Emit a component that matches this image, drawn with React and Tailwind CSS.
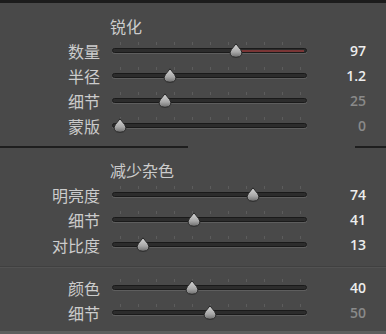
import React from "react";

const sharpen = [
  { label: "数量", value: "97", frac: 97 / 150, active: true, red: true },
  { label: "半径", value: "1.2", frac: 0.7 / 2.5, active: true },
  { label: "细节", value: "25", frac: 0.25, active: false },
  { label: "蒙版", value: "0", frac: 0, active: false },
];

const noise = [
  { label: "明亮度", value: "74", frac: 0.74, active: true },
  { label: "细节", value: "41", frac: 0.41, active: true },
  { label: "对比度", value: "13", frac: 0.13, active: true },
];

const color = [
  { label: "颜色", value: "40", frac: 0.4, active: true },
  { label: "细节", value: "50", frac: 0.5, active: false },
];

const cjk = { fontFamily: '"Noto Sans CJK SC", "Noto Sans", sans-serif' };
const num = { fontFamily: '"Open Sans", "Liberation Sans", sans-serif' };

function Thumb() {
  return (
    <svg width="14" height="15" viewBox="0 0 14 15">
      <defs>
        <linearGradient id="tg" x1="0" y1="0" x2="0" y2="1">
          <stop offset="0" stopColor="#d6d6d6" />
          <stop offset="0.6" stopColor="#a8a8a8" />
          <stop offset="1" stopColor="#6c6c6c" />
        </linearGradient>
      </defs>
      <path
        d="M7 0.8 L11.6 6.6 Q13.6 9.2 12.6 11.8 Q11.2 14.3 7 14.3 Q2.8 14.3 1.4 11.8 Q0.4 9.2 2.4 6.6 Z"
        fill="url(#tg)"
        stroke="#262626"
        strokeWidth="1"
      />
    </svg>
  );
}

function Slider({ frac, red }) {
  const x = 8 + 180 * frac;
  return (
    <div className="relative w-[195px] h-[25px] flex flex-col justify-center">
      <div className="flex h-[3px] mb-[3px]">
        {Array.from({ length: 11 }).map((_, i) => (
          <div
            key={i}
            className="absolute w-px h-[3px] bg-[#5c5c5c]"
            style={{ left: 8 + 18 * i }}
          />
        ))}
      </div>
      <div className="relative h-[5px] rounded-full bg-[#2c2c2c] border border-[#1a1a1a] shadow-[0_1px_0_#5e5e5e]">
        {red && (
          <div
            className="absolute top-[1px] right-[2px] h-[2px] bg-[#7a3636]"
            style={{ left: x }}
          />
        )}
      </div>
      <div className="h-[6px]" />
      <div className="absolute top-[5px]" style={{ left: x - 7 }}>
        <Thumb />
      </div>
    </div>
  );
}

function Row({ label, value, frac, active, red }) {
  return (
    <div className="flex items-center h-[25px]">
      <div className="w-[100px] text-right text-[16px] leading-none text-[#cccccc]" style={cjk}>
        {label}
      </div>
      <div className="ml-[12px]">
        <Slider frac={frac} red={red} />
      </div>
      <div
        className={`w-[59px] text-right text-[14px] font-semibold leading-none ${
          active ? "text-[#ededed]" : "text-[#8a8a8a]"
        }`}
        style={num}
      >
        {value}
      </div>
    </div>
  );
}

function Header({ children }) {
  return (
    <div className="flex items-center h-[25px] pl-[110px] text-[16px] leading-none text-[#cccccc]" style={cjk}>
      {children}
    </div>
  );
}

export default function App() {
  return (
    <div className="w-[386px] h-[334px] bg-[#494949] flex flex-col overflow-hidden">
      <div className="h-[3px] bg-[#1c1c1c]" />
      <div className="pt-[10px]">
        <Header>锐化</Header>
        {sharpen.map((r, i) => (
          <Row key={i} {...r} />
        ))}
      </div>
      <div className="mt-[8px] flex h-[2px]">
        <div className="w-[188px] bg-[#1e1e1e]" />
        <div className="flex-1" />
        <div className="w-[31px] bg-[#1e1e1e]" />
      </div>
      <div className="pt-[9px]">
        <Header>减少杂色</Header>
        {noise.map((r, i) => (
          <Row key={i} {...r} />
        ))}
      </div>
      <div className="mt-[9px] h-px bg-[#404040]" />
      <div className="h-px bg-[#525252]" />
      <div className="pt-[7px]">
        {color.map((r, i) => (
          <Row key={i} {...r} />
        ))}
      </div>
      <div className="flex-1" />
      <div className="h-[3px] bg-[#5e5e5e]" />
    </div>
  );
}
